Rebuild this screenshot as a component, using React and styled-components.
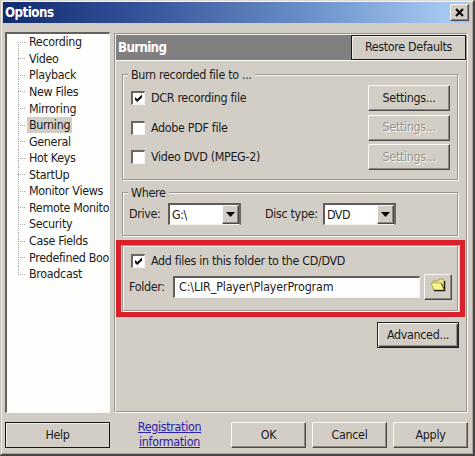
import React from "react";
import styled, { createGlobalStyle, css } from "styled-components";

const Global = createGlobalStyle`
  * { box-sizing: border-box; }
  body {
    margin: 0;
    background: #d4d0c8;
    color: #1c1b1a;
    font: 12.4px/16px "DejaVu Sans Condensed", "DejaVu Sans", sans-serif;
    letter-spacing: -0.32px;
    overflow: hidden;
  }
`;

const Window = styled.main`
  width: 475px;
  height: 456px;
  padding: 1px 3px 0 2px;
  background: #d2cec6;
  border: solid;
  border-width: 1px 2px 2px 1px;
  border-color: #dedbd5 #454545 #454545 #c4c0b8;
  box-shadow: inset 1px 1px #f5f3ef, inset -1px -1px #aaa69f;
`;

const TitleBar = styled.header`
  height: 21px;
  display: flex;
  align-items: center;
  justify-content: space-between;
  padding: 0 1px 0 2px;
  background: linear-gradient(90deg, #102b70, #335197 28%, #6b91ca 66%, #a3c7ef 94%);
`;

const Title = styled.h1`
  margin: 0;
  color: #fff;
  font-size: 13.2px;
  line-height: 20px;
  letter-spacing: -0.5px;
`;

const raised = css`
  border: 1px solid;
  border-color: #f8f7f4 #4c4b49 #4c4b49 #f8f7f4;
  box-shadow: inset -1px -1px #8b8882;
`;

const CloseButton = styled.button`
  ${raised}
  width: 19px;
  height: 17px;
  padding: 0;
  display: grid;
  place-items: center;
  background: #d2cec6;
`;

const Body = styled.div`
  display: flex;
  gap: 4px;
  padding: 9px 0 0 2px;
`;

const Tree = styled.ul`
  width: 105px;
  height: 381px;
  margin: 0;
  padding: 0 0 0 11px;
  overflow: hidden;
  list-style: none;
  background: #fefefd;
  border: solid;
  border-width: 2px 1px 1px 2px;
  border-color: #62615e #f8f7f4 #f8f7f4 #62615e;
`;

const TreeItem = styled.li`
  height: 16.57px;
  display: flex;
  align-items: center;
  white-space: nowrap;

  &::before {
    content: "";
    flex: none;
    width: 9px;
    height: 100%;
    background:
      repeating-linear-gradient(90deg, #aaa 0 1px, transparent 1px 2px) 0 50% / 8px 1px no-repeat,
      repeating-linear-gradient(#aaa 0 1px, transparent 1px 2px) 0
        ${(p) => (p.$first ? "100%" : "0")} / 1px ${(p) => (p.$first || p.$last ? "50%" : "100%")} no-repeat;
  }
`;

const TreeLabel = styled.span`
  height: 16px;
  padding: 0 2px;
  line-height: 16px;
  background: ${(p) => (p.$selected ? "#d2cec6" : "transparent")};
`;

const Panel = styled.section`
  width: 354px;
  height: 380px;
  margin-top: 1px;
  border: 1px solid;
  border-color: #96938d #fff #fff #96938d;
  box-shadow: inset 1px 1px #f1efeb, inset -1px -1px #96938d;
`;

const PanelHeader = styled.div`
  display: flex;
  height: 26px;
  margin: 1px 1px 0;
  background: #808080;
  border-bottom: 1px solid #fff;
`;

const PanelTitle = styled.h2`
  flex: 1;
  margin: 0;
  padding-left: 2px;
  color: #fff;
  font-size: 13.2px;
  line-height: 25px;
  letter-spacing: -0.65px;
`;

const Button = styled.button`
  ${raised}
  width: ${(p) => p.$w}px;
  height: ${(p) => p.$h || 26}px;
  flex: none;
  padding: 0 0 1px;
  background: #d2cec6;
  color: inherit;
  font: inherit;
  letter-spacing: inherit;
  white-space: nowrap;

  &:disabled {
    color: #969590;
    text-shadow: 1px 1px #fafaf8;
  }

  ${(p) =>
    p.$kind === "flat" &&
    css`
      border-color: #181818;
      box-shadow: inset 1px 1px #efeee9;
    `}
  ${(p) =>
    p.$kind === "default" &&
    css`
      border-color: #222;
      box-shadow: inset 1px 1px #fff, inset -1px -1px #383838, inset -2px -2px #918e88;
    `}
`;

const Group = styled.div`
  width: 336px;
  height: ${(p) => p.$h}px;
  margin: ${(p) => p.$top}px 0 0 7px;
  border: 1px solid #9b9892;
  box-shadow: inset 1px 1px #f7f6f2, 1px 1px #f7f6f2;
`;

const Legend = styled.div`
  width: max-content;
  height: 16px;
  margin: -8px 0 0 5px;
  padding: 0 3px;
  background: #d2cec6;
`;

const OptionList = styled.div`
  display: grid;
  gap: 3.5px;
  padding-top: 2px;
`;

const OptionRow = styled.div`
  display: flex;
  align-items: center;
  height: 26px;
  padding: 0 7px 0 8px;
`;

const Box = styled.span`
  width: 14px;
  height: 14px;
  flex: none;
  display: grid;
  place-items: center;
  background: #fff;
  border: solid;
  border-width: 2px 1px 1px 2px;
  border-color: #686662 #f5f4f0 #f5f4f0 #686662;
`;

const OptionLabel = styled.span`
  flex: 1;
  padding-left: 6px;
  white-space: nowrap;
`;

const FieldRow = styled.div`
  display: flex;
  align-items: center;
  height: 22px;
  margin-top: ${(p) => p.$top}px;
  padding-left: 6px;
`;

const FieldLabel = styled.span`
  width: ${(p) => p.$w}px;
  flex: none;
`;

const Sunken = styled.div`
  display: flex;
  align-items: center;
  justify-content: space-between;
  flex: none;
  width: ${(p) => p.$w}px;
  height: 22px;
  padding-left: ${(p) => p.$pad || 2}px;
  margin-right: ${(p) => p.$after || 0}px;
  background: #fff;
  border: solid;
  border-width: 2px 1px 1px 2px;
  border-color: #5e5d5a #f4f3ef #f4f3ef #5e5d5a;
`;

const Combo = styled(Sunken)`
  border-right: 2px solid #6b6966;
  letter-spacing: -0.5px;
`;

const PathField = styled(Sunken)`
  letter-spacing: -0.14px;
  padding-bottom: 1px;
`;

const DropButton = styled.span`
  ${raised}
  width: 17px;
  height: 19px;
  display: grid;
  place-items: center;
  background: #d2cec6;
`;

const Highlight = styled.div`
  width: 349px;
  height: 77px;
  margin: 4px 0 0 1px;
  padding: 0 1px;
  border: 5px solid #d8212a;
`;

const FolderGroup = styled(Group)`
  margin: 0;
  padding-top: 2px;
`;

const AdvancedRow = styled.div`
  display: flex;
  justify-content: flex-end;
  padding: 5px 8px 0 0;
`;

const Footer = styled.footer`
  display: flex;
  align-items: center;
  padding: 7px 0 0 2px;
`;

const RegistrationLink = styled.a`
  width: 119px;
  margin-right: 2px;
  color: #2c20a8;
  line-height: 15px;
  text-align: center;
  text-decoration: underline;
  transform: translateY(-1px);
`;

const Actions = styled.div`
  display: flex;
  gap: 6px;
`;

const Check = () => (
  <svg width="9" height="9" viewBox="0 0 9 9">
    <path d="M1 3v3l2.3 2L8 3.6v-3L3.3 5z" fill="#111" />
  </svg>
);

const Arrow = () => (
  <svg width="9" height="5" viewBox="0 0 9 5">
    <path d="M0 0h9L4.5 5z" fill="#050505" />
  </svg>
);

const Cross = () => (
  <svg width="9" height="9" viewBox="0 0 9 9">
    <path d="M1 1l7 7M8 1L1 8" stroke="#050505" strokeWidth="2.1" />
  </svg>
);

const Folder = () => (
  <svg width="16" height="14" viewBox="0 0 16 14">
    <path d="M3 3h5l1-2h4l1 2v9H3z" fill="#eee985" stroke="#999340" strokeWidth=".8" />
    <path d="M1 5h10l3 7H4z" fill="#faf58d" stroke="#aaa344" strokeWidth=".8" />
    <path d="M4 12.7h10.6V3" fill="none" stroke="#171706" strokeWidth="1.3" />
    <path d="M11.3 5l2.7 6" stroke="#4b480d" />
  </svg>
);

const sections = [
  "Recording", "Video", "Playback", "New Files", "Mirroring",
  "Burning", "General", "Hot Keys", "StartUp", "Monitor Views",
  "Remote Monito", "Security", "Case Fields", "Predefined Boo", "Broadcast",
];

const formats = [
  { name: "DCR recording file", checked: true },
  { name: "Adobe PDF file", checked: false },
  { name: "Video DVD (MPEG-2)", checked: false },
];

export default function App() {
  return (
    <>
      <Global />
      <Window>
        <TitleBar>
          <Title>Options</Title>
          <CloseButton aria-label="Close"><Cross /></CloseButton>
        </TitleBar>
        <Body>
          <Tree>
            {sections.map((name, i) => (
              <TreeItem key={name} $first={i === 0} $last={i === sections.length - 1}>
                <TreeLabel $selected={name === "Burning"}>{name}</TreeLabel>
              </TreeItem>
            ))}
          </Tree>
          <Panel>
            <PanelHeader>
              <PanelTitle>Burning</PanelTitle>
              <Button $w={115} $h={25} $kind="flat">Restore Defaults</Button>
            </PanelHeader>
            <Group $h={106} $top={13}>
              <Legend>Burn recorded file to ...</Legend>
              <OptionList>
                {formats.map(({ name, checked }) => (
                  <OptionRow key={name}>
                    <Box>{checked && <Check />}</Box>
                    <OptionLabel>{name}</OptionLabel>
                    <Button $w={82} disabled={!checked}>Settings...</Button>
                  </OptionRow>
                ))}
              </OptionList>
            </Group>
            <Group $h={44} $top={12}>
              <Legend>Where</Legend>
              <FieldRow $top={2}>
                <FieldLabel $w={39}>Drive:</FieldLabel>
                <Combo $w={73} $after={24}>G:\<DropButton><Arrow /></DropButton></Combo>
                <FieldLabel $w={58}>Disc type:</FieldLabel>
                <Combo $w={73}>DVD<DropButton><Arrow /></DropButton></Combo>
              </FieldRow>
            </Group>
            <Highlight>
              <FolderGroup $h={66}>
                <OptionRow>
                  <Box><Check /></Box>
                  <OptionLabel>Add files in this folder to the CD/DVD</OptionLabel>
                </OptionRow>
                <FieldRow $top={2}>
                  <FieldLabel $w={44}>Folder:</FieldLabel>
                  <PathField $w={247} $pad={4} $after={4}>C:\LIR_Player\PlayerProgram</PathField>
                  <Button $w={28} aria-label="Browse"><Folder /></Button>
                </FieldRow>
              </FolderGroup>
            </Highlight>
            <AdvancedRow><Button $w={82} $kind="default">Advanced...</Button></AdvancedRow>
          </Panel>
        </Body>
        <Footer>
          <Button $w={105} $kind="flat">Help</Button>
          <RegistrationLink>Registration<br />information</RegistrationLink>
          <Actions>
            <Button $w={75}>OK</Button>
            <Button $w={75}>Cancel</Button>
            <Button $w={75}>Apply</Button>
          </Actions>
        </Footer>
      </Window>
    </>
  );
}
